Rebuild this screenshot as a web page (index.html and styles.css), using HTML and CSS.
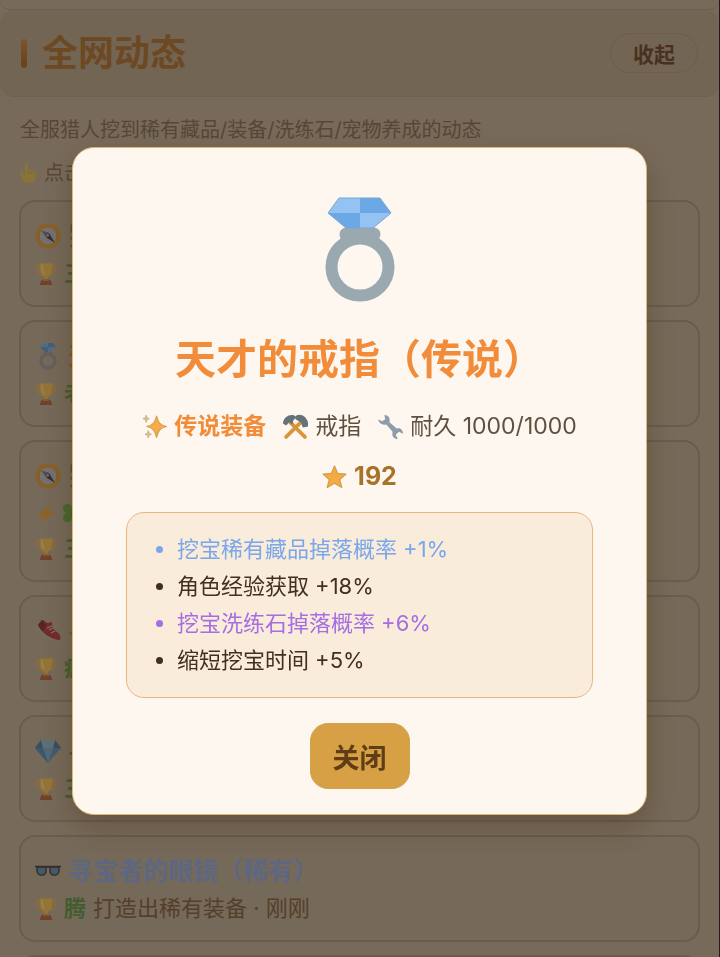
FILE: index.html
```html
<!DOCTYPE html>
<html lang="zh-CN">
<head>
    <meta charset="UTF-8">
    <meta name="viewport" content="width=device-width, initial-scale=1.0">
    <title>全网动态</title>
    <link rel="stylesheet" href="styles.css">
</head>
<body>

    <!-- shared icons -->
    <svg class="icon-defs" aria-hidden="true">
        <symbol id="i-ring" viewBox="0 0 72 106">
            <circle cx="36" cy="70" r="28.5" fill="none" stroke="#9aa8b0" stroke-width="12"/>
            <path d="M20 45c-4-3-6-8-3-12 3-3 8-3 10-4h18c2 1 7 1 10 4 3 4 1 9-3 12-9-4-23-4-32 0z" fill="#9aa8b0"/>
            <path d="M15 1h21v15H4z" fill="#94c3f3"/>
            <path d="M36 1h20l11 15H36z" fill="#6ca8e6"/>
            <path d="M4 16h32v15H22z" fill="#6ca8e6"/>
            <path d="M36 16h31L49 31H36z" fill="#94c3f3"/>
            <path d="M15 1h41l11 15-18 15H22L4 16z" fill="none" stroke="#78a6d0" stroke-width="1"/>
        </symbol>
        <symbol id="i-ring-small" viewBox="0 0 26 28">
            <circle cx="13" cy="19" r="7" fill="none" stroke="#a5a09a" stroke-width="3.400"/>
            <path d="M9 9h8l1 5H8z" fill="#a5a09a"/>
            <path d="M8 1h10l3 4-5 5h-6L5 5z" fill="#8fb4d6"/>
            <path d="M13 1h5l3 4h-8zM5 5h8v5h-3z" fill="#759dc6"/>
        </symbol>
        <symbol id="i-trophy" viewBox="0 0 22 24">
            <path d="M5 4H1.500c0 5 1 8 6 9M17 4h3.500c0 5-1 8-6 9" fill="none" stroke="#eeb060" stroke-width="1.800"/>
            <path d="M4.500 1.500h13c.3 8-1 12-5 13.500v3h-3v-3c-4-1.500-5.300-5.500-5-13.500z" fill="#f8c25c"/>
            <path d="M7 3c0 4 .3 7 2 9" fill="none" stroke="#fbdc8c" stroke-width="1.500"/>
            <path d="M6.500 18h9l2 5h-13z" fill="#bd6d4a"/>
            <path d="M8 17h6v2H8z" fill="#dc9848"/>
        </symbol>
        <symbol id="i-compass" viewBox="0 0 26 26">
            <circle cx="13" cy="13" r="11.200" fill="#c7bbb2" stroke="#e6a03a" stroke-width="3"/>
            <circle cx="13" cy="13" r="9" fill="none" stroke="#b38a55" stroke-width=".7"/>
            <path d="M7 8l7 2 6 10-8-5z" fill="#53505a"/>
            <path d="M7 8l7 2-2 5z" fill="#85818b"/>
            <circle cx="13" cy="12.500" r="1" fill="#d8cdbf"/>
        </symbol>
        <symbol id="i-bolt" viewBox="0 0 24 24">
            <path d="M20 1L2 13l8 1-7 9 19-12-8-1z" fill="#eca43c"/>
        </symbol>
        <symbol id="i-clover" viewBox="0 0 24 24">
            <g fill="#7cab50"><circle cx="7" cy="6" r="5"/><circle cx="17" cy="6" r="5"/><circle cx="7" cy="16" r="5"/><circle cx="17" cy="16" r="5"/><path d="M7 6h10v10H7z"/></g>
            <path d="M12 11l8 12" stroke="#527e36" stroke-width="2"/>
        </symbol>
        <symbol id="i-shoe" viewBox="0 0 26 26">
            <path d="M1 9c1 5 14 13 22 15l2-3L3 6z" fill="#c4b6aa"/>
            <path d="M3 7l4-5c3 0 3 3 6 3l4-1c0 6 1 7 5 10 3 2 4 5 3 8-8 0-20-8-22-15z" fill="#bc4b42"/>
            <path d="M3 7l4-5 4 5-3 6z" fill="#963c39"/>
            <path d="M12 10l5-2m-3 4l4-2m-2 5l4-2" stroke="#e6b3a6" stroke-width="1.200"/>
        </symbol>
        <symbol id="i-gem" viewBox="0 0 26 24">
            <path d="M6 1h14l6 8-13 15L0 9z" fill="#6f99b8"/>
            <path d="M6 1l2 8H0zM20 1l-2 8h8z" fill="#5f839e"/>
            <path d="M8 9h10l-5 15z" fill="#86afc9"/>
            <path d="M6 1h14l-2 8H8z" fill="#9bbac8"/>
            <path d="M0 9h8l5 15z" fill="#6690ae"/>
        </symbol>
        <symbol id="i-glasses" viewBox="0 0 26 12">
            <path d="M2 2h9v4c0 5-8 6-9 0zM15 2h9v4c-1 6-9 5-9 0z" fill="#7193ad" stroke="#5a4f47" stroke-width="1.500" stroke-linejoin="round"/>
            <path d="M0 1.500h26M10 3q3-2 6 0" fill="none" stroke="#5a4f47" stroke-width="1.500"/>
        </symbol>
        <symbol id="i-hand" viewBox="0 0 18 22">
            <path d="M6 11V2c0-2 3-2 3 0v6c2-1 3 0 3 1 2-1 3 0 3 1 2 0 3 1 2 4-1 5-3 7-8 7-4 0-6-3-8-10 0-2 2-2 3 0l2 3z" fill="#e6c060"/>
            <path d="M9 9v2m3-1v2m3-1v2" stroke="#c29a44" stroke-width=".8"/>
        </symbol>
        <symbol id="i-sparkles" viewBox="0 0 24 24">
            <path d="M14 2c1.500 6 3 8.500 9.500 10C17 13.500 15.500 16 14 22.500 12.500 16 11 13.500 4.500 12 11 10.500 12.500 8 14 2z" fill="#f3ad49" stroke="#dfa050" stroke-width="1.200" stroke-linejoin="round"/>
            <path d="M4 1c.5 3 .5 3 3 3.500C4.500 5 4.500 5 4 8c-.5-3-.5-3-3-3.500C3.500 4 3.500 4 4 1zM6 16c.5 3 .5 3 3 3.500-2.500.5-2.500.5-3 3.500-.5-3-.5-3-3-3.500 2.500-.5 2.500-.5 3-3.500z" fill="#edcf83" stroke="#c7b58a" stroke-width="1.200"/>
        </symbol>
        <symbol id="i-hammers" viewBox="0 0 24 24">
            <path d="M7 8l14 14M17 8L3 22" stroke="#d8953c" stroke-width="3.600" stroke-linecap="round"/>
            <path d="M0 9C0 5 4 0 10 1l3 2-3 3-1 4-3-2-3 3z" fill="#66727a"/>
            <path d="M12 2c5-3 10 0 12 6v4l-5 1-2-5-5-3z" fill="#66727a"/>
        </symbol>
        <symbol id="i-wrench" viewBox="0 0 24 24">
            <path d="M6 1c4 0 6 3 5 7l7 6c3-1 6 1 6 5l-4-2-3 3 2 4c-4 0-6-3-5-7L8 10c-4 1-7-1-8-5l4 2 3-2z" fill="#8d9cac"/>
        </symbol>
        <symbol id="i-star" viewBox="0 0 24 24">
            <path d="M12 2l3 7 8 .7-6 5.300 2 7.500-7-4-7 4L7 15 1 9.700 9 9z" fill="#f2ac43" stroke="#d59b4e" stroke-width="1.200" stroke-linejoin="round"/>
        </symbol>
    </svg>

    <main class="page">
        <div class="prev-section"></div>

        <header class="section-header">
            <h1>全网动态</h1>
            <button class="fold-btn" type="button">收起</button>
        </header>

        <section class="feed">
            <p class="desc">全服猎人挖到稀有藏品/装备/洗练石/宠物养成的动态</p>
            <p class="hint"><svg class="hand"><use href="#i-hand"/></svg>点击</p>

            <div class="feed-list">
                <article class="card">
                    <h2 class="normal"><svg><use href="#i-compass"/></svg>罗</h2>
                    <p><svg><use href="#i-trophy"/></svg><b>三</b></p>
                </article>
                <article class="card">
                    <h2 class="legend"><svg><use href="#i-ring-small"/></svg>天</h2>
                    <p><svg><use href="#i-trophy"/></svg><b>老</b></p>
                </article>
                <article class="card">
                    <h2 class="normal"><svg><use href="#i-compass"/></svg>罗</h2>
                    <p class="boost"><svg><use href="#i-bolt"/></svg><svg><use href="#i-clover"/></svg></p>
                    <p><svg><use href="#i-trophy"/></svg><b>三</b></p>
                </article>
                <article class="card">
                    <h2 class="legend"><svg><use href="#i-shoe"/></svg>寻</h2>
                    <p><svg><use href="#i-trophy"/></svg><b>疯</b></p>
                </article>
                <article class="card">
                    <h2 class="normal"><svg><use href="#i-gem"/></svg>寻</h2>
                    <p><svg><use href="#i-trophy"/></svg><b>三</b></p>
                </article>
                <article class="card">
                    <h2 class="rare"><svg><use href="#i-glasses"/></svg>寻宝者的眼镜（稀有）</h2>
                    <p><svg><use href="#i-trophy"/></svg><b>腾</b><span>打造出稀有装备 · 刚刚</span></p>
                </article>
                <article class="card"></article>
            </div>
        </section>
    </main>

    <div class="overlay">
        <div class="modal" role="dialog" aria-modal="true" aria-labelledby="item-name">
            <svg class="item-icon"><use href="#i-ring"/></svg>
            <h2 class="item-name" id="item-name">天才的戒指（传说）</h2>
            <div class="item-meta">
                <span class="quality"><svg><use href="#i-sparkles"/></svg>传说装备</span>
                <span><svg><use href="#i-hammers"/></svg>戒指</span>
                <span><svg><use href="#i-wrench"/></svg>耐久 1000/1000</span>
                <span class="score"><svg><use href="#i-star"/></svg>192</span>
            </div>
            <ul class="effects">
                <li class="blue">挖宝稀有藏品掉落概率 +1%</li>
                <li>角色经验获取 +18%</li>
                <li class="purple">挖宝洗练石掉落概率 +6%</li>
                <li>缩短挖宝时间 +5%</li>
            </ul>
            <button class="close-btn" type="button">关闭</button>
        </div>
    </div>

</body>
</html>
```
FILE: styles.css
```css
:root {
    --pageBg: #c6b196;
    --headerBg: #c0a88c;
    --line: #b09a82;
    --mainFont: Inter, "Noto Sans CJK SC", sans-serif;
}
* {
    box-sizing: border-box;
}
body {
    margin: 0;
    height: 100vh;
    overflow: hidden;
    background-color: var(--pageBg);
    font-family: var(--mainFont);
}
h1, h2, p, ul {
    margin: 0;
    padding: 0;
}
button {
    font-family: var(--mainFont);
    cursor: pointer;
}
.icon-defs {
    position: absolute;
    width: 0;
    height: 0;
}
.page {
    height: 100vh;
    overflow: hidden;
    border-right: 1px solid #3b3033;
}
.prev-section {
    height: 10px;
    border-bottom: 1px solid #b79d80;
    border-radius: 0 0 14px 14px;
}
.section-header {
    display: flex;
    align-items: center;
    justify-content: space-between;
    height: 87px;
    padding: 0 21px;
    background-color: var(--headerBg);
    border-bottom: 1px solid #b9a187;
    border-radius: 14px;
}
.section-header h1 {
    display: flex;
    align-items: center;
    gap: 15px;
    font-size: 36px;
    line-height: 48px;
    color: #b67a3b;
}
.section-header h1::before {
    content: "";
    width: 6px;
    height: 29px;
    border-radius: 3px;
    background: linear-gradient(#d78a45, #ac6c34);
}
.fold-btn {
    height: 40px;
    padding: 0 22px;
    border: 1px solid #b49c81;
    border-radius: 20px;
    background: none;
    font-size: 21px;
    font-weight: bold;
    color: #7b5037;
}
.feed {
    padding: 18px 19px 0;
}
.desc, .hint {
    font-size: 20px;
    line-height: 30px;
    color: #927559;
}
.desc {
    padding-left: 1px;
}
.hint {
    display: flex;
    align-items: center;
    gap: 7px;
    margin: 13px 0 12px;
}
.hand {
    width: 18px;
    height: 22px;
}
.feed-list {
    display: flex;
    flex-direction: column;
    gap: 13px;
}
.card {
    min-height: 107px;
    padding: 14px;
    border: 2px solid var(--line);
    border-radius: 16px;
    background-color: #c4af94;
}
.card h2 {
    display: flex;
    align-items: center;
    gap: 7px;
    font-size: 25px;
    line-height: 40px;
}
.card h2 svg {
    width: 26px;
    height: 28px;
}
.card p {
    display: flex;
    align-items: center;
    gap: 7px;
    min-height: 35px;
    font-size: 22px;
    line-height: 35px;
    color: #8c6a48;
}
.card p svg {
    width: 22px;
    height: 24px;
}
.card .boost {
    gap: 4px;
}
.card b {
    color: #6f9a50;
}
.normal {
    color: #8d8175;
}
.rare {
    color: #9cacd8;
}
.legend {
    color: #d58d3c;
}
.overlay {
    position: fixed;
    inset: 0;
    display: flex;
    align-items: center;
    justify-content: center;
    padding: 5px 1px 0 0;
    background-color: rgba(0, 0, 0, 0.4);
}
.modal {
    display: flex;
    flex-direction: column;
    align-items: center;
    width: 80%;
    padding: 49px 53px 25px;
    border: 1px solid #dcb878;
    border-radius: 22px;
    background-color: #fdf7f0;
    box-shadow: 0 12px 30px rgba(60, 35, 5, 0.3);
}
.item-icon {
    width: 72px;
    height: 106px;
}
.item-name {
    margin: 26px 0 12px;
    font-size: 41px;
    line-height: 60px;
    color: #f08c3a;
}
.item-meta {
    display: flex;
    flex-wrap: wrap;
    justify-content: center;
    column-gap: 17px;
    font-size: 23px;
    line-height: 50px;
    color: #60503f;
}
.item-meta span {
    display: flex;
    align-items: center;
    gap: 7px;
}
.item-meta svg {
    width: 25px;
    height: 25px;
}
.item-meta .quality {
    font-weight: bold;
    color: #f08c3a;
}
.item-meta .score {
    font-size: 25px;
    font-weight: bold;
    color: #a87329;
}
.effects {
    align-self: stretch;
    margin: 11px 0 25px;
    padding: 18px 20px 18px 50px;
    border: 1px solid #e9b680;
    border-radius: 18px;
    background-color: #f9ecdb;
    font-size: 22px;
    line-height: 37px;
    color: #41301f;
}
.blue {
    color: #7ba6ea;
}
.purple {
    color: #a66ee2;
}
.close-btn {
    height: 66px;
    padding: 0 22px;
    border: 1px solid #cfa44f;
    border-radius: 18px;
    background-color: #d7a044;
    font-size: 27px;
    font-weight: bold;
    color: #5f3d16;
}
```
